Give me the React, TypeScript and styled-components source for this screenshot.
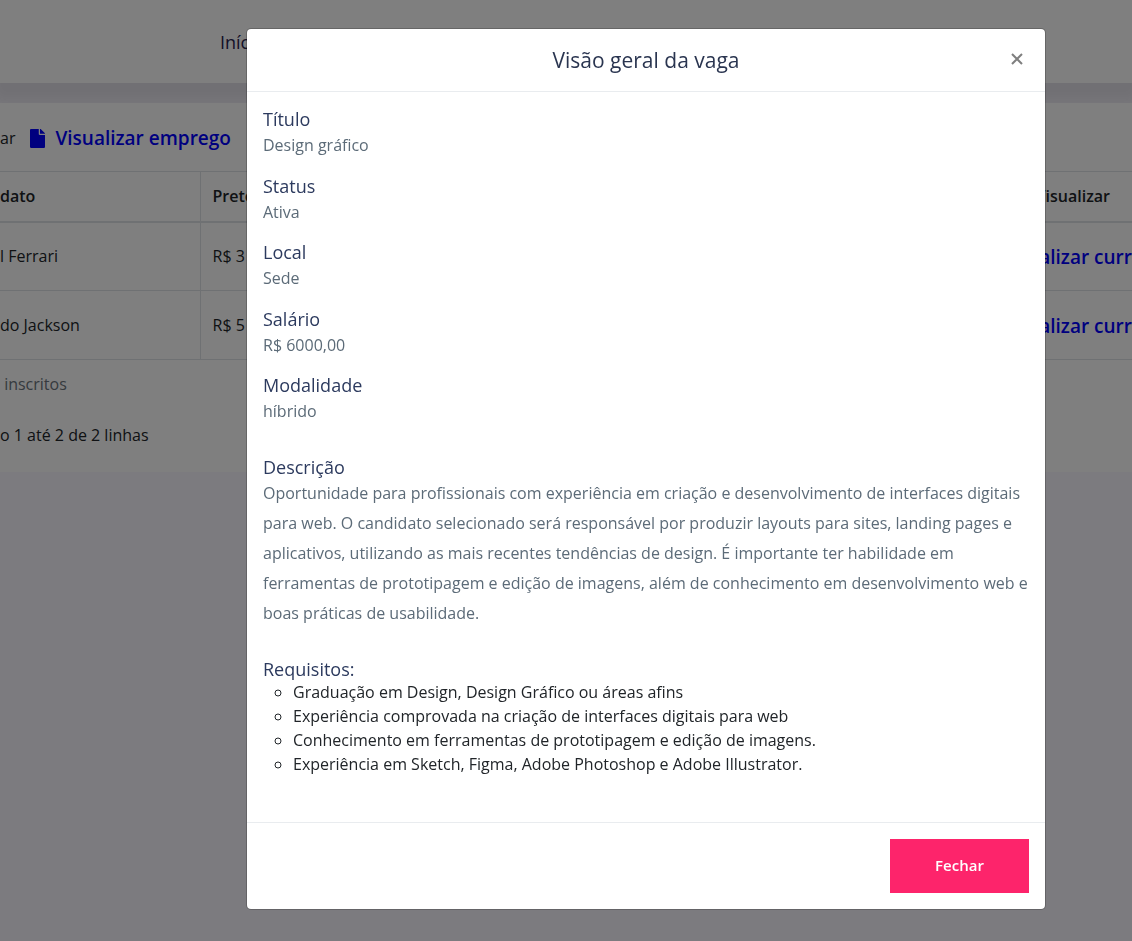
import React from "react";
import styled, { createGlobalStyle } from "styled-components";

const GlobalStyle = createGlobalStyle`
  * { box-sizing: border-box; }
  body {
    margin: 0;
    background: #f9f7ff;
    color: #212529;
    font-family: "Open Sans", "Noto Sans", sans-serif;
    font-size: 16px;
    line-height: 24px;
  }
  h1, h2, p, ul { margin: 0; padding: 0; font-weight: 400; }
`;

const Page = styled.div`
  min-height: 100vh;
  overflow: hidden;
`;

const TopBar = styled.header`
  display: flex;
  align-items: center;
  height: 83px;
  padding-left: 220px;
  background: #fff;
  box-shadow: 0 10px 15px 10px rgba(25, 25, 25, 0.1);
`;

const NavLink = styled.a`
  color: #28234f;
  font-size: 18px;
  text-decoration: none;
`;

const Panel = styled.main`
  position: relative;
  margin-top: 20px;
  padding-bottom: 25px;
  background: #fff;
`;

const Toolbar = styled.div`
  display: flex;
  align-items: center;
  gap: 15px;
  height: 68px;
  padding-top: 2px;
`;

const BackLink = styled.a`
  color: #212529;
  text-decoration: none;
`;

const ActionLink = styled.a`
  display: inline-flex;
  align-items: center;
  gap: 10px;
  color: #0000ff;
  font-size: 19px;
  font-weight: 600;
  white-space: nowrap;
  text-decoration: none;
  vertical-align: middle;
`;

const Table = styled.table`
  width: 100%;
  border-collapse: collapse;
  table-layout: fixed;
`;

const Col = styled.col<{ $width?: number }>`
  width: ${(p) => (p.$width ? `${p.$width}px` : "auto")};
`;

const HeadCell = styled.th`
  height: 50px;
  padding: 0 12px;
  border: 1px solid #dee2e6;
  border-bottom-width: 2px;
  font-weight: 600;
  text-align: left;

  &:first-child {
    padding-left: 0;
    border-left: 0;
  }

  &:last-child {
    padding-right: 22px;
    border-right: 0;
    text-align: right;
  }
`;

const Cell = styled.td`
  height: 69px;
  padding: 0 12px;
  border: 1px solid #dee2e6;

  &:first-child {
    padding-left: 0;
    border-left: 0;
  }

  &:last-child {
    padding-right: 0;
    border-right: 0;
    text-align: right;
  }
`;

const Caption = styled.p`
  margin-left: -9px;
  padding-top: 12px;
  color: #6c757d;
`;

const Summary = styled.p`
  padding-top: 27px;
`;

const Backdrop = styled.div`
  position: fixed;
  inset: 0;
  display: flex;
  justify-content: center;
  align-items: flex-start;
  padding: 28px 0 28px 160px;
  background: rgba(0, 0, 0, 0.5);
  overflow: auto;
`;

const Dialog = styled.section`
  width: 100%;
  max-width: 800px;
  border: 1px solid rgba(0, 0, 0, 0.2);
  border-radius: 5px;
  background: #fff;
  background-clip: padding-box;
`;

const DialogHeader = styled.header`
  display: grid;
  grid-template-columns: 32px 1fr 32px;
  align-items: center;
  height: 63px;
  padding: 0 12px;
  border-bottom: 1px solid #e9ecef;
`;

const DialogTitle = styled.h1`
  grid-column: 2;
  color: #2a3550;
  font-size: 21px;
  line-height: 30px;
  text-align: center;
`;

const CloseButton = styled.button`
  display: flex;
  align-items: center;
  justify-content: center;
  width: 32px;
  height: 32px;
  padding: 0 0 2px;
  border: 0;
  background: none;
  color: #7f7f7f;
  cursor: pointer;
`;

const DialogBody = styled.div`
  padding: 16px 14px 46px 16px;
`;

const Field = styled.div<{ $gap?: number }>`
  margin-bottom: ${(p) => p.$gap ?? 14}px;
`;

const Label = styled.h2`
  color: #2c3a5e;
  font-size: 18px;
  line-height: 22px;
`;

const Value = styled.p`
  color: #5c6b78;
  line-height: 30px;
`;

const Requirements = styled.ul`
  padding-left: 30px;
  list-style: circle;
`;

const DialogFooter = styled.footer`
  display: flex;
  justify-content: flex-end;
  padding: 16px;
  border-top: 1px solid #e9ecef;
`;

const PrimaryButton = styled.button`
  width: 139px;
  height: 54px;
  padding: 0 0 2px;
  border: 0;
  background: #fd246b;
  color: #fff;
  font-family: inherit;
  font-size: 15px;
  font-weight: 600;
  cursor: pointer;
`;

const FileIcon = () => (
  <svg width="15" height="19" viewBox="0 0 384 512" preserveAspectRatio="none" fill="currentColor" aria-hidden="true">
    <path d="M224 136V0H24C10.700 0 0 10.700 0 24v464c0 13.300 10.700 24 24 24h336c13.300 0 24-10.700 24-24V160H248c-13.200 0-24-10.800-24-24zm160-14.100v6.100H256V0h6.100c6.400 0 12.500 2.500 17 7l97.900 98c4.500 4.500 7 10.600 7 16.900z" />
  </svg>
);

const CloseIcon = () => (
  <svg width="12" height="12" viewBox="0 0 12 12" fill="none" stroke="currentColor" strokeWidth="2" aria-hidden="true">
    <path d="M1 1l10 10M11 1L1 11" />
  </svg>
);

const candidates = [
  { name: "l Ferrari", salary: "R$ 3" },
  { name: "do Jackson", salary: "R$ 5" },
];

const fields = [
  { label: "Título", value: "Design gráfico", gap: 15 },
  { label: "Status", value: "Ativa" },
  { label: "Local", value: "Sede", gap: 15 },
  { label: "Salário", value: "R$ 6000,00" },
  { label: "Modalidade", value: "híbrido", gap: 30 },
  {
    label: "Descrição",
    value:
      "Oportunidade para profissionais com experiência em criação e desenvolvimento de interfaces digitais para web. O candidato selecionado será responsável por produzir layouts para sites, landing pages e aplicativos, utilizando as mais recentes tendências de design. É importante ter habilidade em ferramentas de prototipagem e edição de imagens, além de conhecimento em desenvolvimento web e boas práticas de usabilidade.",
    gap: 30,
  },
];

const requirements = [
  "Graduação em Design, Design Gráfico ou áreas afins",
  "Experiência comprovada na criação de interfaces digitais para web",
  "Conhecimento em ferramentas de prototipagem e edição de imagens.",
  "Experiência em Sketch, Figma, Adobe Photoshop e Adobe Illustrator.",
];

export default function App() {
  return (
    <>
      <GlobalStyle />
      <Page>
        <TopBar>
          <NavLink href="#inicio">Iníc</NavLink>
        </TopBar>
        <Panel>
          <Toolbar>
            <BackLink href="#voltar">ar</BackLink>
            <ActionLink href="#emprego">
              <FileIcon />
              Visualizar emprego
            </ActionLink>
          </Toolbar>
          <Table>
            <colgroup>
              <Col $width={200} />
              <Col />
              <Col $width={232} />
            </colgroup>
            <thead>
              <tr>
                <HeadCell>dato</HeadCell>
                <HeadCell>Prete</HeadCell>
                <HeadCell>Visualizar</HeadCell>
              </tr>
            </thead>
            <tbody>
              {candidates.map((c) => (
                <tr key={c.name}>
                  <Cell>{c.name}</Cell>
                  <Cell>{c.salary}</Cell>
                  <Cell>
                    <ActionLink href="#curriculo">
                      <FileIcon />
                      Visualizar curr
                    </ActionLink>
                  </Cell>
                </tr>
              ))}
            </tbody>
          </Table>
          <Caption>e inscritos</Caption>
          <Summary>o 1 até 2 de 2 linhas</Summary>
        </Panel>
      </Page>
      <Backdrop>
        <Dialog role="dialog" aria-modal="true" aria-labelledby="dialog-title">
          <DialogHeader>
            <DialogTitle id="dialog-title">Visão geral da vaga</DialogTitle>
            <CloseButton type="button" aria-label="Fechar janela">
              <CloseIcon />
            </CloseButton>
          </DialogHeader>
          <DialogBody>
            {fields.map((f) => (
              <Field key={f.label} $gap={f.gap}>
                <Label>{f.label}</Label>
                <Value>{f.value}</Value>
              </Field>
            ))}
            <Label>Requisitos:</Label>
            <Requirements>
              {requirements.map((r) => (
                <li key={r}>{r}</li>
              ))}
            </Requirements>
          </DialogBody>
          <DialogFooter>
            <PrimaryButton type="button">Fechar</PrimaryButton>
          </DialogFooter>
        </Dialog>
      </Backdrop>
    </>
  );
}
